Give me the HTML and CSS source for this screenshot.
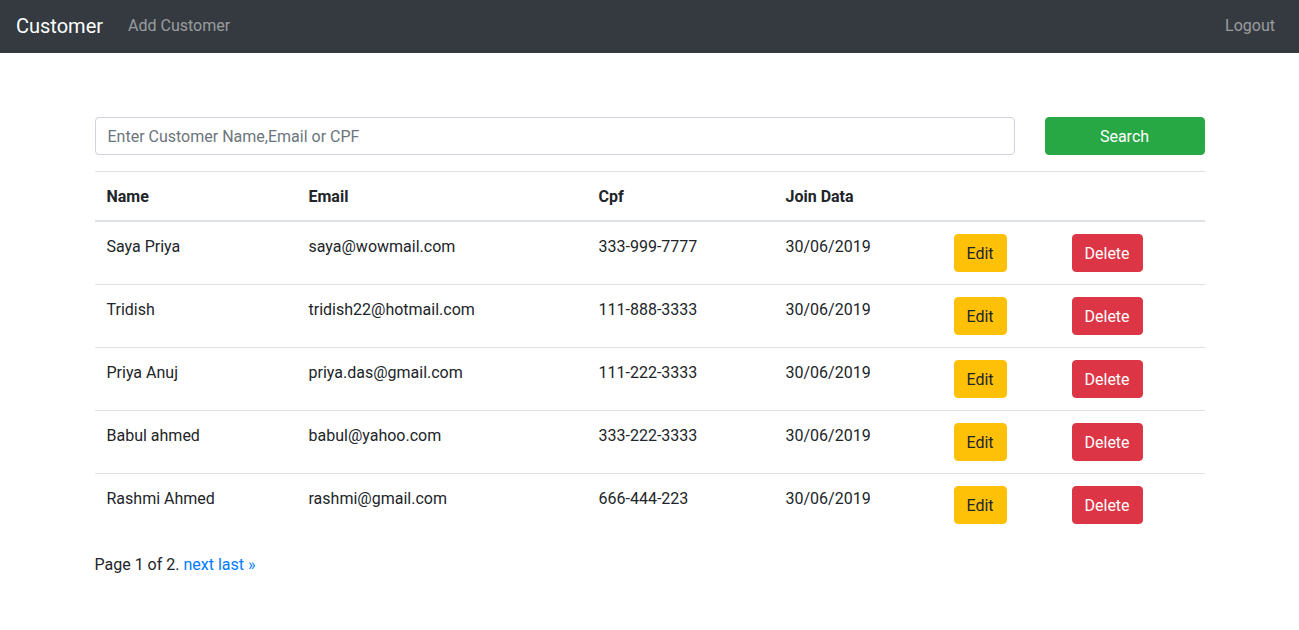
FILE: index.html
```html
<!DOCTYPE html>
<html lang="en">
<head>
<meta charset="utf-8">
<title>Customer</title>
<link rel="stylesheet" href="styles.css">
</head>
<body>
<nav class="navbar">
  <a class="brand" href="#">Customer</a>
  <a class="nav-link" href="#">Add Customer</a>
  <a class="nav-link logout" href="#">Logout</a>
</nav>
<main class="container">
  <form class="search-row">
    <input class="search-input" type="text" placeholder="Enter Customer Name,Email or CPF">
    <button class="btn btn-success search-btn" type="button">Search</button>
  </form>
  <table class="table">
    <colgroup>
      <col class="c-name"><col class="c-email"><col class="c-cpf"><col class="c-date"><col class="c-edit"><col class="c-del">
    </colgroup>
    <thead>
      <tr><th>Name</th><th>Email</th><th>Cpf</th><th>Join Data</th><th></th><th></th></tr>
    </thead>
    <tbody>
      <tr><td>Saya Priya</td><td>saya@wowmail.com</td><td>333-999-7777</td><td>30/06/2019</td><td><button class="btn btn-warning">Edit</button></td><td><button class="btn btn-danger">Delete</button></td></tr>
      <tr><td>Tridish</td><td>tridish22@hotmail.com</td><td>111-888-3333</td><td>30/06/2019</td><td><button class="btn btn-warning">Edit</button></td><td><button class="btn btn-danger">Delete</button></td></tr>
      <tr><td>Priya Anuj</td><td>priya.das@gmail.com</td><td>111-222-3333</td><td>30/06/2019</td><td><button class="btn btn-warning">Edit</button></td><td><button class="btn btn-danger">Delete</button></td></tr>
      <tr><td>Babul ahmed</td><td>babul@yahoo.com</td><td>333-222-3333</td><td>30/06/2019</td><td><button class="btn btn-warning">Edit</button></td><td><button class="btn btn-danger">Delete</button></td></tr>
      <tr><td>Rashmi Ahmed</td><td>rashmi@gmail.com</td><td>666-444-223</td><td>30/06/2019</td><td><button class="btn btn-warning">Edit</button></td><td><button class="btn btn-danger">Delete</button></td></tr>
    </tbody>
  </table>
  <p class="pager">Page 1 of 2. <a href="#">next</a> <a href="#">last &raquo;</a></p>
</main>
</body>
</html>
```

FILE: styles.css
```css
* { box-sizing: border-box; }
html, body { margin: 0; }
body {
  font-family: Roboto, "Liberation Sans", sans-serif;
  font-size: 16px;
  line-height: 1.5;
  color: #212529;
  background: #fff;
}
a { text-decoration: none; color: #007bff; }

.navbar {
  display: flex;
  align-items: center;
  height: 53px;
  padding: 0 16px 2px;
  background: #343a40;
}
.brand {
  color: #fff;
  font-size: 20px;
  line-height: 30px;
  margin-right: 17px;
}
.nav-link {
  color: rgba(255, 255, 255, 0.5);
  padding: 0 8px;
  line-height: 24px;
}
.logout { margin-left: auto; }

.container {
  width: 1140px;
  margin: 0 auto;
  padding: 0 15px;
}

.btn {
  display: inline-block;
  font: inherit;
  line-height: 24px;
  height: 38px;
  padding: 7px 12px 5px;
  border: 1px solid transparent;
  border-radius: 4px;
  cursor: pointer;
}
.btn-success { background: #28a745; border-color: #28a745; color: #fff; }
.btn-warning { background: #ffc107; border-color: #ffc107; color: #212529; }
.btn-danger { background: #dc3545; border-color: #dc3545; color: #fff; }

.search-row {
  display: flex;
  gap: 30px;
  margin: 64px 0 16px;
}
.search-input {
  flex: 0 0 920px;
  height: 38px;
  padding: 6px 12px;
  font: inherit;
  color: #495057;
  border: 1px solid #ced4da;
  border-radius: 4px;
  outline: none;
}
.search-input::placeholder { color: #6c757d; opacity: 1; }
.search-btn { flex: 0 0 160px; }

.table {
  width: 100%;
  border-collapse: collapse;
  table-layout: fixed;
  margin-bottom: 16px;
}
.c-name { width: 202px; }
.c-email { width: 290px; }
.c-cpf { width: 187px; }
.c-date { width: 168px; }
.c-edit { width: 118px; }
.c-del { width: 145px; }
.table th, .table td {
  padding: 12px;
  line-height: 26px;
  text-align: left;
  vertical-align: top;
  border-top: 1px solid #dee2e6;
}
.table th { font-weight: 700; }
.table thead th { border-bottom: 2px solid #dee2e6; padding-bottom: 10px; }
.table .btn { vertical-align: top; }

.pager { margin: 0; line-height: 26px; }
```
